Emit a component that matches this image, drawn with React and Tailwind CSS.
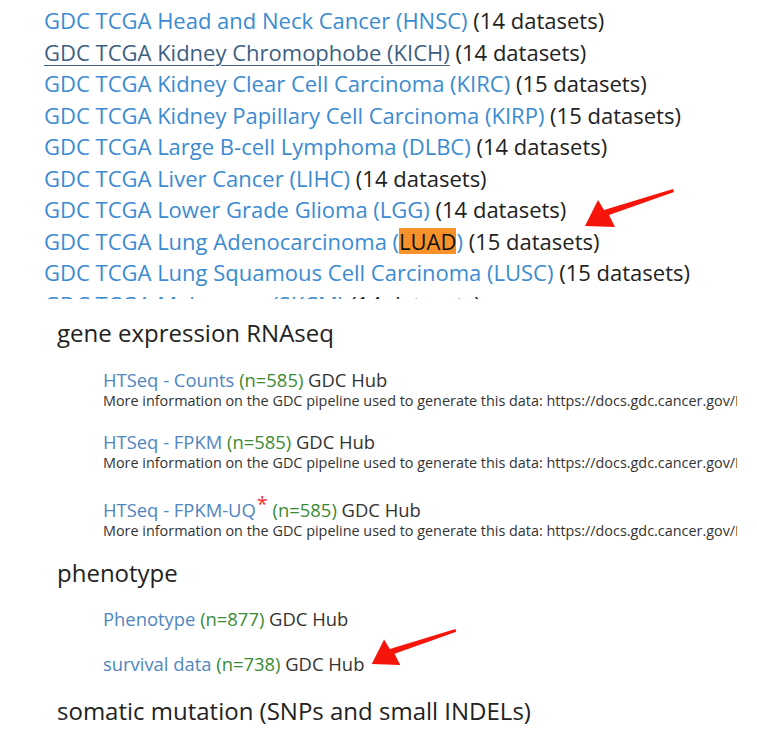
const cohorts = [
  { name: "GDC TCGA Head and Neck Cancer", code: "HNSC", n: 14 },
  { name: "GDC TCGA Kidney Chromophobe", code: "KICH", n: 14, hover: true },
  { name: "GDC TCGA Kidney Clear Cell Carcinoma", code: "KIRC", n: 15 },
  { name: "GDC TCGA Kidney Papillary Cell Carcinoma", code: "KIRP", n: 15 },
  { name: "GDC TCGA Large B-cell Lymphoma", code: "DLBC", n: 14 },
  { name: "GDC TCGA Liver Cancer", code: "LIHC", n: 14 },
  { name: "GDC TCGA Lower Grade Glioma", code: "LGG", n: 14 },
  { name: "GDC TCGA Lung Adenocarcinoma", code: "LUAD", n: 15, mark: true },
  { name: "GDC TCGA Lung Squamous Cell Carcinoma", code: "LUSC", n: 15 },
  { name: "GDC TCGA Melanoma", code: "SKCM", n: 14 },
];

const info =
  "More information on the GDC pipeline used to generate this data: https://docs.gdc.cancer.gov/Data/Bioinformatics_Pipelines/Expression_mRNA_Pipeline/";

function Arrow({ className }) {
  // red hand-drawn style arrow, head at the left
  return (
    <svg className={className} viewBox="0 0 90 40" fill="#f5150b">
      <path d="M88 1 L89 4 L24 27 L30 39 L0 38 L13 12 L19 22 Z" />
    </svg>
  );
}

function Dataset({ label, n, star, desc, className = "" }) {
  return (
    <div className={className}>
      <div className="text-[18.4px] leading-[22px] text-[#333] whitespace-nowrap">
        <a className="text-[#4f86c0]">{label}</a>
        {star && <span className="relative -top-[6px] ml-[1px] text-[#ff2a2a] text-[20px] leading-none">*</span>}{" "}
        <span className="text-[#3b8a34]">(n={n})</span> GDC Hub
      </div>
      {desc && <div className="text-[14.4px] leading-[20px] text-[#333] whitespace-nowrap">{info}</div>}
    </div>
  );
}

export default function App() {
  return (
    <div className="relative w-[757px] h-[730px] bg-white overflow-hidden" style={{ fontFamily: '"Open Sans", "Noto Sans", sans-serif' }}>
      {/* cohort list screenshot */}
      <div className="h-[299px] overflow-hidden pt-[5px] pl-[44px]">
        {cohorts.map((c) => (
          <div key={c.code} className="text-[22px] leading-[31.5px] text-[#222] whitespace-nowrap">
            {c.hover ? (
              <a className="text-[#3d5f82] underline underline-offset-[4px] decoration-1">
                {c.name} ({c.code})
              </a>
            ) : (
              <a className="text-[#3b8bd0]">
                {c.name} (
                {c.mark ? (
                  <span className="inline-block bg-[#f7922a] text-[#111] leading-[26px] h-[26px]">{c.code}</span>
                ) : (
                  c.code
                )}
                )
              </a>
            )}{" "}
            ({c.n} datasets)
          </div>
        ))}
      </div>

      {/* dataset list screenshot */}
      <div className="w-[737px] overflow-hidden pl-[57px] text-[#222]">
        <h2 className="text-[24px] leading-[30px] mt-[19px]">gene expression RNAseq</h2>
        <div className="pl-[46px] mt-[21px]">
          <Dataset label="HTSeq - Counts" n={585} desc />
          <Dataset label="HTSeq - FPKM" n={585} desc className="mt-[20px]" />
          <Dataset label="HTSeq - FPKM-UQ" n={585} star desc className="mt-[26px]" />
        </div>
        <h2 className="text-[24px] leading-[30px] mt-[17px]">phenotype</h2>
        <div className="pl-[46px] mt-[20px]">
          <Dataset label="Phenotype" n={877} />
          <Dataset label="survival data" n={738} className="mt-[23px]" />
        </div>
        <h2 className="text-[24px] leading-[30px] mt-[21px]">somatic mutation (SNPs and small INDELs)</h2>
      </div>

      <Arrow className="absolute left-[585px] top-[188px] w-[90px] h-[40px]" />
      <Arrow className="absolute left-[367px] top-[628px] w-[95px] h-[38px]" />
    </div>
  );
}
